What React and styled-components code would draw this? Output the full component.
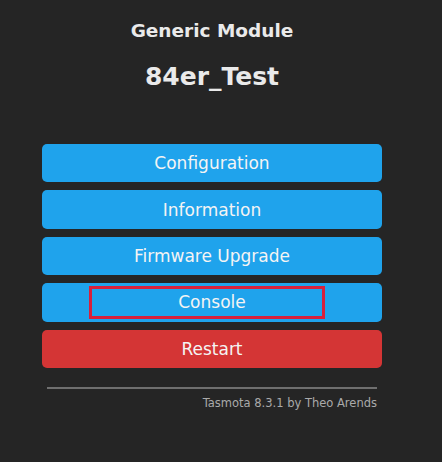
import React from 'react';
import styled, { createGlobalStyle } from 'styled-components';

const GlobalStyle = createGlobalStyle`
  html, body {
    margin: 0;
    padding: 0;
    background: #252525;
  }
  body {
    font-family: "DejaVu Sans", Verdana, sans-serif;
    color: #eaeaea;
  }
`;

const Page = styled.div`
  width: 340px;
  padding: 18px 0 0 42px;
  display: flex;
  flex-direction: column;
`;

const Module = styled.h3`
  margin: 0;
  text-align: center;
  font-size: 18.5px;
  font-weight: bold;
  line-height: 26px;
`;

const DeviceName = styled.h2`
  margin: 17px 0 0;
  text-align: center;
  font-size: 25px;
  font-weight: bold;
  line-height: 32px;
`;

const Menu = styled.div`
  display: flex;
  flex-direction: column;
  gap: 8px;
  margin-top: 51px;
`;

const Button = styled.button`
  position: relative;
  border: 0;
  border-radius: 5px;
  background: ${p => (p.$danger ? '#d43535' : '#1fa3ec')};
  color: #f4f4f4;
  height: 38.4px;
  width: 100%;
  font-family: "DejaVu Sans", Verdana, sans-serif;
  font-size: 17px;
  padding: 0;
`;

const Highlight = styled.span`
  position: absolute;
  left: 47px;
  top: 3px;
  width: 236px;
  height: 33px;
  box-sizing: border-box;
  border: 3px solid #d8203c;
`;

const Rule = styled.hr`
  margin: 19px 5px 0;
  border: 0;
  border-top: 2px solid #6f6f6f;
`;

const Footer = styled.div`
  text-align: right;
  padding-right: 5px;
  margin-top: 7px;
  font-size: 11.5px;
  color: #aaa;
`;

const items = ['Configuration', 'Information', 'Firmware Upgrade'];

export default function App() {
  return (
    <>
      <GlobalStyle />
      <Page>
        <Module>Generic Module</Module>
        <DeviceName>84er_Test</DeviceName>
        <Menu>
          {items.map(label => (
            <Button key={label}>{label}</Button>
          ))}
          <Button>
            Console
            <Highlight />
          </Button>
          <Button $danger>Restart</Button>
        </Menu>
        <Rule />
        <Footer>Tasmota 8.3.1 by Theo Arends</Footer>
      </Page>
    </>
  );
}
